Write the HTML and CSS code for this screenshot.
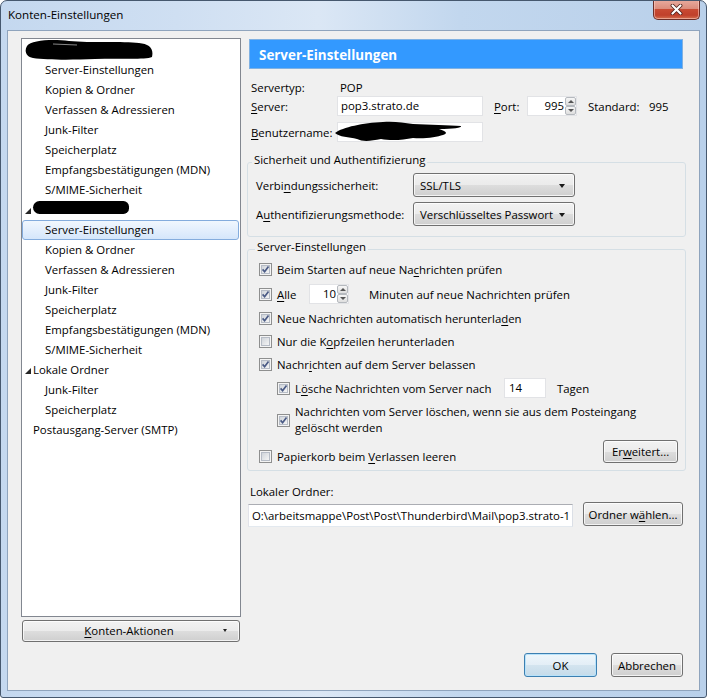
FILE: index.html
```html
<!DOCTYPE html>
<html lang="de">
<head>
<meta charset="utf-8">
<title>Konten-Einstellungen</title>
<link rel="stylesheet" href="styles.css">
</head>
<body>
<svg class="defs" width="0" height="0" aria-hidden="true">
  <defs>
    <linearGradient id="cbfill" x1="0" y1="0" x2="1" y2="1">
      <stop offset="0" stop-color="#cdd2d8"/>
      <stop offset="1" stop-color="#f7f7f7"/>
    </linearGradient>
  </defs>
</svg>
<div class="window">
  <div class="titlebar">
    <span class="title">Konten-Einstellungen</span>
    <div class="close">
      <svg width="13" height="11" viewBox="0 0 13 11"><path d="M2.5 1.5l8 8M10.5 1.5l-8 8" stroke="#4a1c16" stroke-width="3.8" stroke-linecap="round"/><path d="M2.5 1.5l8 8M10.5 1.5l-8 8" stroke="#fff" stroke-width="2.2" stroke-linecap="round"/></svg>
    </div>
  </div>
  <div class="client">
    <div class="main">
      <div class="sidebar">
        <div class="tree">
          <div class="trow account"><svg width="130" height="20" viewBox="0 0 130 20"><path d="M2 6C6 0 28 -1 44 1C66 3 98 1 114 3C124 4 129 8 127 17C120 20 96 18 70 19C46 20 22 20 8 18C1 17 -1 11 2 6Z" fill="#000"/><path d="M28 4l24 1" stroke="#888" stroke-width="1"/></svg></div>
          <div class="trow child">Server-Einstellungen</div>
          <div class="trow child">Kopien &amp; Ordner</div>
          <div class="trow child">Verfassen &amp; Adressieren</div>
          <div class="trow child">Junk-Filter</div>
          <div class="trow child">Speicherplatz</div>
          <div class="trow child">Empfangsbestätigungen (MDN)</div>
          <div class="trow child">S/MIME-Sicherheit</div>
          <div class="trow parent"><svg class="twisty" width="6" height="6" viewBox="0 0 6 6"><path d="M6 0V6H0Z" fill="#262626"/></svg><span class="blob"></span></div>
          <div class="trow child selected">Server-Einstellungen</div>
          <div class="trow child">Kopien &amp; Ordner</div>
          <div class="trow child">Verfassen &amp; Adressieren</div>
          <div class="trow child">Junk-Filter</div>
          <div class="trow child">Speicherplatz</div>
          <div class="trow child">Empfangsbestätigungen (MDN)</div>
          <div class="trow child">S/MIME-Sicherheit</div>
          <div class="trow parent"><svg class="twisty" width="6" height="6" viewBox="0 0 6 6"><path d="M6 0V6H0Z" fill="#262626"/></svg><span>Lokale Ordner</span></div>
          <div class="trow child">Junk-Filter</div>
          <div class="trow child">Speicherplatz</div>
          <div class="trow parent"><span class="notwisty"></span><span>Postausgang-Server (SMTP)</span></div>
        </div>
        <div class="btn actions"><span class="btn-label"><u>K</u>onten-Aktionen</span><span class="caret-small"></span></div>
      </div>

      <div class="content">
        <div class="header">Server-Einstellungen</div>

        <div class="info">
          <div class="irow r-type"><span class="ilabel">Servertyp:</span><span class="ival">POP</span></div>
          <div class="irow r-server">
            <span class="ilabel"><u>S</u>erver:</span>
            <span class="field f-server">pop3.strato.de</span>
            <span class="plabel"><u>P</u>ort:</span>
            <span class="num n-port"><span class="numval">995</span><span class="spin"><span class="sup"></span><span class="sdn"></span></span></span>
            <span class="stdlabel">Standard:</span><span>995</span>
          </div>
          <div class="irow r-user">
            <span class="ilabel"><u>B</u>enutzername:</span>
            <span class="field f-server"></span>
            <svg class="scribble" width="132" height="24" viewBox="0 0 132 24"><path d="M2 14C10 8 30 4 50 3C62 2 70 4 80 5C96 6 116 6 128 7C129 9 120 10 106 10C112 12 116 14 110 16C104 18 92 20 80 19C70 21 58 22 48 20C38 22 30 23 24 20C16 18 6 18 2 14Z" fill="#000"/></svg>
          </div>
        </div>

        <fieldset class="group g-sec">
          <legend>Sicherheit und Authentifizierung</legend>
          <div class="srow"><span class="slabel">Verbi<u>n</u>dungssicherheit:</span><span class="dropdown"><span>SSL/TLS</span><span class="caret"></span></span></div>
          <div class="srow s2"><span class="slabel">A<u>u</u>thentifizierungsmethode:</span><span class="dropdown"><span>Verschlüsseltes Passwort</span><span class="caret"></span></span></div>
        </fieldset>

        <fieldset class="group g-srv">
          <legend>Server-Einstellungen</legend>
          <div class="crow c1"><svg class="cb" width="13" height="13" viewBox="0 0 13 13"><rect x="0.5" y="0.5" width="12" height="12" fill="#f4f4f4" stroke="#8e8f8f"/><rect x="2.5" y="2.5" width="8" height="8" fill="url(#cbfill)" stroke="#b6bcc6"/><path d="M3.6 6.4l2 2.3 3.9-5.3" fill="none" stroke="#4a5a85" stroke-width="1.7"/></svg><span>Beim Starten auf neue Na<u>c</u>hrichten prüfen</span></div>
          <div class="crow c2"><svg class="cb" width="13" height="13" viewBox="0 0 13 13"><rect x="0.5" y="0.5" width="12" height="12" fill="#f4f4f4" stroke="#8e8f8f"/><rect x="2.5" y="2.5" width="8" height="8" fill="url(#cbfill)" stroke="#b6bcc6"/><path d="M3.6 6.4l2 2.3 3.9-5.3" fill="none" stroke="#4a5a85" stroke-width="1.7"/></svg><span class="alle"><u>A</u>lle</span><span class="num n-min"><span class="numval">10</span><span class="spin"><span class="sup"></span><span class="sdn"></span></span></span><span class="minuten">Minuten auf neue Nachrichten prüfen</span></div>
          <div class="crow c3"><svg class="cb" width="13" height="13" viewBox="0 0 13 13"><rect x="0.5" y="0.5" width="12" height="12" fill="#f4f4f4" stroke="#8e8f8f"/><rect x="2.5" y="2.5" width="8" height="8" fill="url(#cbfill)" stroke="#b6bcc6"/><path d="M3.6 6.4l2 2.3 3.9-5.3" fill="none" stroke="#4a5a85" stroke-width="1.7"/></svg><span>Neue Nachrichten automatisch herunterla<u>d</u>en</span></div>
          <div class="crow c4"><svg class="cb" width="13" height="13" viewBox="0 0 13 13"><rect x="0.5" y="0.5" width="12" height="12" fill="#f4f4f4" stroke="#8e8f8f"/><rect x="2.5" y="2.5" width="8" height="8" fill="url(#cbfill)" stroke="#b6bcc6"/></svg><span>Nur die K<u>o</u>pfzeilen herunterladen</span></div>
          <div class="crow c5"><svg class="cb" width="13" height="13" viewBox="0 0 13 13"><rect x="0.5" y="0.5" width="12" height="12" fill="#f4f4f4" stroke="#8e8f8f"/><rect x="2.5" y="2.5" width="8" height="8" fill="url(#cbfill)" stroke="#b6bcc6"/><path d="M3.6 6.4l2 2.3 3.9-5.3" fill="none" stroke="#4a5a85" stroke-width="1.7"/></svg><span>Nachr<u>i</u>chten auf dem Server belassen</span></div>
          <div class="crow c6 indent"><svg class="cb" width="13" height="13" viewBox="0 0 13 13"><rect x="0.5" y="0.5" width="12" height="12" fill="#f4f4f4" stroke="#8e8f8f"/><rect x="2.5" y="2.5" width="8" height="8" fill="url(#cbfill)" stroke="#b6bcc6"/><path d="M3.6 6.4l2 2.3 3.9-5.3" fill="none" stroke="#4a5a85" stroke-width="1.7"/></svg><span class="loesche">L<u>ö</u>sche Nachrichten vom Server nach</span><span class="field f-days">14</span><span class="tagen">Tagen</span></div>
          <div class="crow c7 indent"><svg class="cb" width="13" height="13" viewBox="0 0 13 13"><rect x="0.5" y="0.5" width="12" height="12" fill="#f4f4f4" stroke="#8e8f8f"/><rect x="2.5" y="2.5" width="8" height="8" fill="url(#cbfill)" stroke="#b6bcc6"/><path d="M3.6 6.4l2 2.3 3.9-5.3" fill="none" stroke="#4a5a85" stroke-width="1.7"/></svg><span class="twoline">Nachrichten vom Server löschen, wenn sie aus dem Posteingang<br>gelöscht werden</span></div>
          <div class="crow c8"><span class="c8label"><svg class="cb" width="13" height="13" viewBox="0 0 13 13"><rect x="0.5" y="0.5" width="12" height="12" fill="#f4f4f4" stroke="#8e8f8f"/><rect x="2.5" y="2.5" width="8" height="8" fill="url(#cbfill)" stroke="#b6bcc6"/></svg><span>Papierkorb beim <u>V</u>erlassen leeren</span></span><span class="btn b-erw">Er<u>w</u>eitert...</span></div>
        </fieldset>

        <div class="local-label">Lokaler Ordner:</div>
        <div class="local-row">
          <span class="field f-path">O:\arbeitsmappe\Post\Post\Thunderbird\Mail\pop3.strato-1</span>
          <span class="btn b-folder">Ordner w<u>ä</u>hlen...</span>
        </div>
      </div>
    </div>
    <div class="footer">
      <span class="btn b-ok">OK</span>
      <span class="btn b-cancel">Abbrechen</span>
    </div>
  </div>
</div>
</body>
</html>
```
FILE: styles.css
```css
* { box-sizing: border-box; }
html, body { margin: 0; padding: 0; }
body {
  width: 707px;
  height: 698px;
  font-family: "Open Sans", "Noto Sans", sans-serif;
  font-size: 11.4px;
  color: #000;
  background: #fff;
}
.defs { position: absolute; width: 0; height: 0; }
u { text-decoration: underline; text-underline-offset: 2px; }

.window {
  width: 707px;
  height: 698px;
  border: 1px solid #46586e;
  border-radius: 7px 7px 3px 3px;
  background: linear-gradient(90deg, #c4d8ef 0%, #cfdff2 25%, #dbe7f5 45%, #c2d7ee 65%, #b9d0ea 100%);
  padding: 0 6px 6px 6px;
  display: flex;
  flex-direction: column;
  overflow: hidden;
}
.titlebar {
  height: 29px;
  flex: none;
  display: flex;
  justify-content: space-between;
  align-items: flex-start;
}
.title {
  padding: 6px 0 0 1px;
  font-size: 11.6px;
  line-height: 16px;
}
.close {
  margin-top: -1px;
  width: 47px;
  height: 20px;
  border: 1px solid #6b2e28;
  border-top: none;
  border-radius: 0 0 5px 5px;
  background: linear-gradient(#e8ab9f 0%, #db8d7d 45%, #c84a33 50%, #c0402b 80%, #d3704f 100%);
  box-shadow: inset 0 0 0 1px rgba(255, 210, 200, 0.55);
  display: flex;
  align-items: center;
  justify-content: center;
}

.client {
  flex: 1;
  background: #f0f0f0;
  border: 1px solid #8fa4bd;
  padding: 7px 13px 13px 13px;
  display: flex;
  flex-direction: column;
}
.main {
  flex: 1;
  display: flex;
  gap: 6px;
  min-height: 0;
}

/* ---------- sidebar ---------- */
.sidebar {
  width: 220px;
  display: flex;
  flex-direction: column;
}
.tree {
  flex: 1;
  background: #fff;
  border: 1px solid #828790;
  padding-top: 1px;
}
.trow {
  height: 20px;
  line-height: 20px;
  white-space: nowrap;
  display: flex;
  align-items: center;
}
.trow.child { padding-left: 23px; }
.trow.parent { padding-left: 3px; }
.trow.account { padding-left: 3px; }
.twisty { margin: 1px 2px 0 0; flex: none; }
.notwisty { width: 8px; flex: none; }
.blob {
  display: inline-block;
  width: 96px;
  height: 13px;
  background: #000;
  border-radius: 7px 6px 6px 7px;
  margin-top: -6px;
}
.trow.selected {
  margin-right: 1px;
  border: 1px solid #84acdd;
  border-radius: 3px;
  background: linear-gradient(#f1f7fe, #d5e6fb);
  padding-left: 22px;
  line-height: 18px;
}

.btn {
  display: flex;
  align-items: center;
  justify-content: center;
  border: 1px solid #707070;
  border-radius: 3px;
  background: linear-gradient(#f2f2f2 0%, #ebebeb 50%, #dddddd 51%, #cfcfcf 100%);
  box-shadow: inset 0 0 0 1px rgba(255, 255, 255, 0.75);
  white-space: nowrap;
}
.actions {
  height: 22px;
  margin: 3px 1px 0 1px;
  padding: 0 12px 2px 0;
}
.btn-label { flex: 1; text-align: center; padding-left: 12px; }
.caret-small {
  width: 0;
  height: 0;
  border-left: 2px solid transparent;
  border-right: 2px solid transparent;
  border-top: 3px solid #222;
}

/* ---------- content ---------- */
.content {
  width: 439px;
  display: flex;
  flex-direction: column;
}
.header {
  margin: 1px 3px 0 2px;
  height: 30px;
  background: #3399ff;
  border: 1px solid #7fb1e3;
  color: #fff;
  font-weight: 700;
  font-size: 13.4px;
  line-height: 29px;
  padding: 1px 0 0 9px;
}

.info { padding-left: 4px; }
.irow {
  display: flex;
  align-items: center;
  position: relative;
}
.r-type { margin-top: 10px; height: 16px; }
.r-server { margin-top: 1px; height: 20px; }
.r-user { margin-top: 6px; height: 20px; }
.ilabel { width: 86px; flex: none; }
.ival { padding-left: 3px; }
.field {
  display: block;
  height: 20px;
  line-height: 18px;
  background: #fff;
  border: 1px solid #e2e3e6;
  padding-left: 3px;
  white-space: nowrap;
  overflow: hidden;
}
.f-server { width: 146px; }
.plabel { margin-left: 11px; width: 33px; }
.num {
  display: flex;
  align-items: center;
  height: 20px;
  background: #fff;
  border: 1px solid #e2e3e6;
}
.n-port { width: 50px; }
.numval { flex: 1; text-align: right; padding-right: 1px; line-height: 18px; }
.spin {
  width: 11px;
  height: 18px;
  display: flex;
  flex-direction: column;
}
.sup, .sdn {
  flex: 1;
  border: 1px solid #b5b9be;
  border-radius: 2px;
  background: linear-gradient(#f6f6f6, #dedede);
  display: flex;
  align-items: center;
  justify-content: center;
}
.sup::after, .sdn::after {
  content: "";
  width: 0;
  height: 0;
  border-left: 3px solid transparent;
  border-right: 3px solid transparent;
}
.sup::after { border-bottom: 3px solid #555; }
.sdn::after { border-top: 3px solid #555; }
.stdlabel { margin-left: 11px; width: 61px; }
.scribble { position: absolute; left: 82px; top: -3px; }

/* ---------- group boxes ---------- */
.group {
  margin: 0;
  border: 1px solid #d5dfe5;
  border-radius: 3px;
  min-width: 0;
}
.group legend {
  padding: 0 2px 4px 2px;
  margin-left: -4px;
  line-height: 16px;
}
.g-sec {
  margin-top: 10px;
  padding: 1px 9px 10px 8px;
}
.srow {
  display: flex;
  align-items: center;
  height: 24px;
}
.srow.s2 { margin-top: 5px; }
.slabel { width: 157px; flex: none; }
.dropdown {
  width: 162px;
  height: 24px;
  display: flex;
  align-items: center;
  justify-content: space-between;
  padding: 0 9px 0 6px;
  border: 1px solid #707070;
  border-radius: 3px;
  background: linear-gradient(#f2f2f2 0%, #ebebeb 50%, #dddddd 51%, #cfcfcf 100%);
  box-shadow: inset 0 0 0 1px rgba(255, 255, 255, 0.75);
  white-space: nowrap;
}
.caret {
  width: 0;
  height: 0;
  border-left: 3.5px solid transparent;
  border-right: 3.5px solid transparent;
  border-top: 4px solid #1a1a1a;
  margin-top: 1px;
}

.g-srv {
  margin-top: 2px;
  padding: 0 7px 4px 11px;
}
.crow {
  display: flex;
  align-items: center;
  height: 20px;
  white-space: nowrap;
}
.cb { flex: none; margin-right: 5px; }
.indent { padding-left: 18px; }
.c2 { margin-top: 5px; }
.c3 { margin-top: 4px; }
.c4 { margin-top: 3px; }
.c5 { margin-top: 3px; }
.c6 { margin-top: 4px; }
.c7 { margin-top: 6px; height: 32px; }
.twoline { line-height: 16px; white-space: nowrap; }
.c8 {
  margin-top: 4px;
  height: 26px;
  align-items: flex-start;
  justify-content: space-between;
}
.c8label { display: flex; align-items: center; height: 20px; margin-top: 6px; }
.alle { width: 32px; }
.n-min { width: 40px; }
.minuten { margin-left: 20px; }
.loesche { width: 209px; }
.f-days { width: 42px; padding-left: 4px; }
.tagen { margin-left: 11px; }
.b-erw { width: 75px; height: 23px; }

.local-label {
  margin-top: 13px;
  padding-left: 3px;
  line-height: 16px;
}
.local-row {
  margin-top: 2px;
  display: flex;
  align-items: flex-start;
}
.f-path {
  margin: 2px 0 0 1px;
  width: 325px;
  height: 23px;
  line-height: 21px;
  border: 1px solid #abadb3;
  border-color: #abadb3 #dbdfe6 #e3e9ef #e2e3ea;
}
.b-folder {
  margin-left: 10px;
  width: 100px;
  height: 24px;
}

/* ---------- footer ---------- */
.footer {
  margin-top: 11px;
  display: flex;
  justify-content: flex-end;
  gap: 14px;
  padding-right: 3px;
}
.b-ok, .b-cancel { height: 24px; }
.b-ok {
  width: 73px;
  border-color: #3c7fb1;
  box-shadow: inset 0 0 0 1px #b8e2fa;
  background: linear-gradient(#eef6fb 0%, #e3eef6 50%, #d3e4ef 51%, #c5dbea 100%);
}
.b-cancel { width: 72px; }
```
